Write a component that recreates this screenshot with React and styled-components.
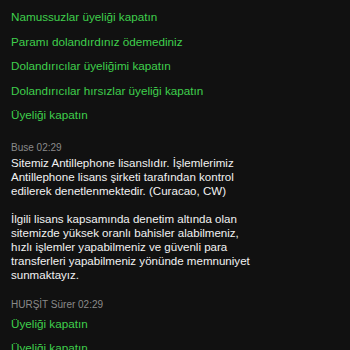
import React from 'react';
import styled, { createGlobalStyle } from 'styled-components';

const GlobalStyle = createGlobalStyle`
  html, body {
    background: #111111;
    margin: 0;
    padding: 0;
  }
  body {
    font-family: 'Liberation Sans', Arial, sans-serif;
  }
`;

const Chat = styled.div`
  box-sizing: border-box;
  display: flex;
  flex-direction: column;
  height: 350px;
  overflow: hidden;
  padding: 9px 11px 0;
  width: 350px;

  & > * {
    flex-shrink: 0;
  }
`;

const Option = styled.div`
  color: #3fcf4c;
  flex-shrink: 0;
  font-size: 11.7px;
  height: 24.5px;
  line-height: 16px;
`;

const Message = styled.div`
  margin-top: ${(props) => props.gap}px;
`;

const Author = styled.div`
  color: #8a8a8a;
  font-size: 10px;
  line-height: 12px;
  margin-bottom: 2px;
`;

const Text = styled.p`
  color: #f2f2f2;
  font-size: 11.55px;
  line-height: 14px;
  margin: 0 0 14px;
  max-width: 245px;

  &:last-child {
    margin-bottom: 0;
  }
`;

const Replies = styled.div`
  display: flex;
  flex-direction: column;
  margin-top: 5px;
`;

const topOptions = [
  'Namussuzlar üyeliği kapatın',
  'Paramı dolandırdınız ödemediniz',
  'Dolandırıcılar üyeliğimi kapatın',
  'Dolandırıcılar hırsızlar üyeliği kapatın',
  'Üyeliği kapatın',
];

const App = () => (
  <>
    <GlobalStyle />
    <Chat>
      {topOptions.map((text) => (
        <Option key={text}>{text}</Option>
      ))}
      <Message gap={10}>
        <Author>Buse 02:29</Author>
        <Text>
          Sitemiz Antillephone lisanslıdır. İşlemlerimiz Antillephone lisans
          şirketi tarafından kontrol edilerek denetlenmektedir. (Curacao, CW)
        </Text>
        <Text>
          İlgili lisans kapsamında denetim altında olan sitemizde yüksek oranlı
          bahisler alabilmeniz, hızlı işlemler yapabilmeniz ve güvenli para
          transferleri yapabilmeniz yönünde memnuniyet sunmaktayız.
        </Text>
      </Message>
      <Message gap={17}>
        <Author>HURŞİT Sürer 02:29</Author>
        <Replies>
          <Option>Üyeliği kapatın</Option>
          <Option>Üyeliği kapatın</Option>
        </Replies>
      </Message>
    </Chat>
  </>
);

export default App;
